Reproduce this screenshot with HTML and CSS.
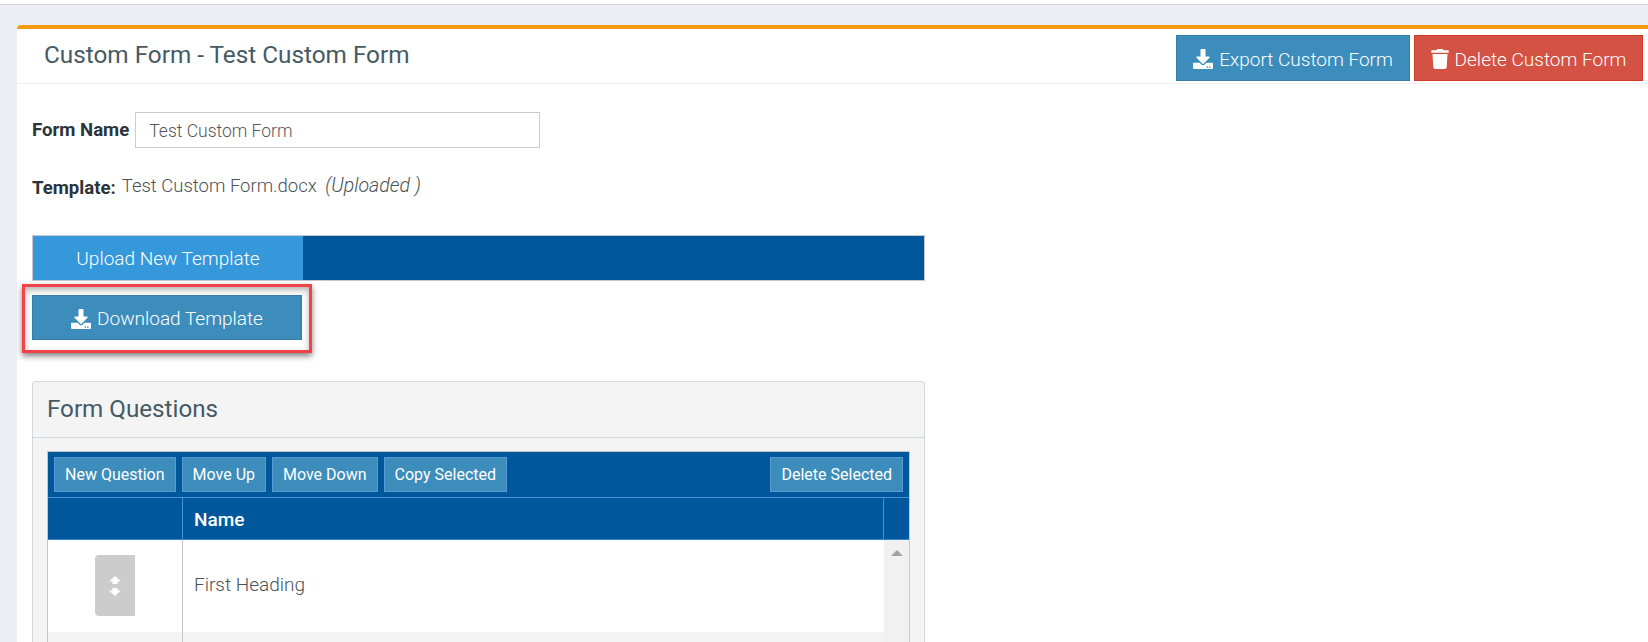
FILE: index.html
```html
<!DOCTYPE html>
<html lang="en">
<head>
    <meta charset="UTF-8">
    <meta name="viewport" content="width=device-width, initial-scale=1.0">
    <title>Custom Form - Test Custom Form</title>
    <link rel="stylesheet" href="styles.css">
</head>
<body>
    <div class="top-strip"></div>
    <div class="card">
        <div class="card-header">
            <h1>Custom Form - Test Custom Form</h1>
            <div class="header-actions">
                <button class="btn btn-blue btn-export">
                    <svg class="icon" viewBox="0 0 512 512"><path d="M216 0h80c13.3 0 24 10.7 24 24v168h87.7c17.8 0 26.7 21.5 14.1 34.1L269.7 378.3c-7.5 7.5-19.8 7.5-27.3 0L90.1 226.1c-12.6-12.6-3.7-34.1 14.1-34.1H192V24c0-13.3 10.7-24 24-24zm296 376v112c0 13.3-10.7 24-24 24H24c-13.3 0-24-10.7-24-24V376c0-13.3 10.7-24 24-24h146.7l49 49c20.1 20.1 52.5 20.1 72.6 0l49-49H488c13.3 0 24 10.7 24 24zm-124 88c0-11-9-20-20-20s-20 9-20 20 9 20 20 20 20-9 20-20zm64 0c0-11-9-20-20-20s-20 9-20 20 9 20 20 20 20-9 20-20z"/></svg>
                    Export Custom Form
                </button>
                <button class="btn btn-red">
                    <svg class="icon icon-trash" viewBox="0 0 448 512"><path d="M432 32H312l-9.4-18.7A24 24 0 0 0 281.1 0H166.8a23.72 23.72 0 0 0-21.4 13.3L136 32H16A16 16 0 0 0 0 48v32a16 16 0 0 0 16 16h416a16 16 0 0 0 16-16V48a16 16 0 0 0-16-16zM53.2 467a48 48 0 0 0 47.9 45h245.8a48 48 0 0 0 47.9-45L416 128H32z"/></svg>
                    Delete Custom Form
                </button>
            </div>
        </div>

        <div class="card-body">
            <div class="form-row">
                <label class="field-label">Form Name</label>
                <input class="text-input" type="text" value="Test Custom Form">
            </div>

            <div class="template-row">
                <span class="field-label template-label">Template:</span>
                <span>Test Custom Form.docx <em>(Uploaded )</em></span>
            </div>

            <div class="tab-bar">
                <div class="tab">Upload New Template</div>
            </div>

            <button class="btn btn-blue btn-download">
                <svg class="icon" viewBox="0 0 512 512"><path d="M216 0h80c13.3 0 24 10.7 24 24v168h87.7c17.8 0 26.7 21.5 14.1 34.1L269.7 378.3c-7.5 7.5-19.8 7.5-27.3 0L90.1 226.1c-12.6-12.6-3.7-34.1 14.1-34.1H192V24c0-13.3 10.7-24 24-24zm296 376v112c0 13.3-10.7 24-24 24H24c-13.3 0-24-10.7-24-24V376c0-13.3 10.7-24 24-24h146.7l49 49c20.1 20.1 52.5 20.1 72.6 0l49-49H488c13.3 0 24 10.7 24 24zm-124 88c0-11-9-20-20-20s-20 9-20 20 9 20 20 20 20-9 20-20zm64 0c0-11-9-20-20-20s-20 9-20 20 9 20 20 20 20-9 20-20z"/></svg>
                Download Template
            </button>

            <div class="panel">
                <div class="panel-heading">Form Questions</div>
                <div class="panel-body">
                    <div class="grid">
                        <div class="grid-toolbar">
                            <button class="tool-btn">New Question</button>
                            <button class="tool-btn">Move Up</button>
                            <button class="tool-btn">Move Down</button>
                            <button class="tool-btn">Copy Selected</button>
                            <button class="tool-btn tool-btn-right">Delete Selected</button>
                        </div>
                        <div class="grid-head">
                            <div class="col-handle"></div>
                            <div class="col-name">Name</div>
                            <div class="col-scroll"></div>
                        </div>
                        <div class="grid-content">
                            <div class="grid-rows">
                                <div class="grid-row">
                                    <div class="col-handle">
                                        <div class="drag-handle">
                                            <svg viewBox="0 0 12 20"><path d="M6 0l6 5.5H8.5v2.5h-5V5.500H0zM6 20l-6-5.500h3.500V12h5v2.500H12z"/></svg>
                                        </div>
                                    </div>
                                    <div class="col-name">First Heading</div>
                                </div>
                                <div class="grid-row grid-row-alt">
                                    <div class="col-handle"></div>
                                    <div class="col-name"></div>
                                </div>
                            </div>
                            <div class="scrollbar"><span class="scroll-up"></span></div>
                        </div>
                    </div>
                </div>
            </div>
        </div>
    </div>

    <!-- red callout drawn over the screenshot -->
    <div class="callout"></div>
</body>
</html>
```

FILE: styles.css
```css
* {
    box-sizing: border-box;
}

html, body {
    height: 642px;
    overflow: hidden;
}

body {
    margin: 0;
    background: #ebeef3;
    color: #4a5257;
    font-family: 'Roboto', sans-serif;
    font-weight: 300;
    font-size: 18.5px;
    position: relative;
}

.top-strip {
    height: 5px;
    background: #fff;
    border-bottom: 1px solid #d4d6da;
    margin-bottom: 20px;
}

.card {
    margin-left: 17px;
    background: #fff;
    border-top: 4px solid #f39c12;
    border-top-left-radius: 4px;
    height: 617px;
}

.card-header {
    height: 55px;
    padding: 6px 5px 0 27px;
    border-bottom: 1px solid #f0f0f0;
    display: flex;
    justify-content: space-between;
}

h1 {
    margin: 0;
    padding-top: 5px;
    font-size: 24.3px;
    line-height: 30px;
    font-weight: 400;
    color: #455a64;
}

.header-actions {
    display: flex;
    gap: 4px;
}

.btn {
    height: 46px;
    border: 1px solid #367fa9;
    border-radius: 0;
    color: #fff;
    font-family: inherit;
    font-weight: 300;
    font-size: 19px;
    display: flex;
    align-items: center;
    justify-content: center;
    gap: 6px;
    padding: 2px 0 0;
}

.btn-blue {
    background: #3c8dbc;
}

.btn-red {
    background: #d35244;
    border-color: #d73925;
    width: 229px;
}

.btn-export {
    width: 234px;
}

.icon {
    width: 20px;
    height: 20px;
    fill: #fff;
}

.icon-trash {
    width: 18px;
}

.card-body {
    padding: 28px 0 0 15px;
}

.form-row {
    display: flex;
    align-items: center;
    gap: 6px;
    height: 36px;
}

.field-label {
    font-weight: 700;
    color: #2b343a;
    font-size: 18.6px;
}

.text-input {
    width: 405px;
    height: 36px;
    border: 1px solid #ccc;
    padding: 2px 13px 0;
    font-family: inherit;
    font-weight: 300;
    font-size: 17.5px;
    color: #555;
    outline: none;
}

.template-row {
    margin-top: 26px;
    height: 24px;
    display: flex;
    gap: 6px;
    align-items: flex-start;
}

.template-row em {
    font-size: 19.5px;
    margin-left: 4px;
}

.template-label {
    margin-top: 3px;
}

.tab-bar {
    margin-top: 37px;
    width: 893px;
    height: 46px;
    background: #00579b;
    border: 1px solid #c4c8cc;
}

.tab {
    width: 270px;
    height: 100%;
    background: #3498db;
    color: #fff;
    font-size: 19px;
    display: flex;
    align-items: center;
    justify-content: center;
}

.btn-download {
    margin-top: 14px;
    width: 270px;
    height: 45px;
    border-color: #367fa9;
}

.panel {
    margin-top: 41px;
    width: 893px;
    border: 1px solid #d5d7de;
    border-bottom: 0;
    border-radius: 4px 4px 0 0;
    background: #f4f4f4;
    height: 261px;
}

.panel-heading {
    height: 56px;
    padding-left: 14px;
    font-size: 24.2px;
    font-weight: 400;
    line-height: 54px;
    color: #455a64;
    border-bottom: 1px solid #d5d7de;
}

.panel-body {
    padding: 13px 14px 0 14px;
}

.grid {
    border: 1px solid #c4c8cc;
    border-bottom: 0;
    height: 191px;
    overflow: hidden;
}

.grid-toolbar {
    height: 46px;
    background: #00579b;
    padding: 5px 6px 0 6px;
    display: flex;
    gap: 6px;
    align-items: flex-start;
    border-bottom: 1px solid #4a90d6;
}

.tool-btn {
    height: 35px;
    padding: 0 10px;
    background: #3c8dbc;
    border: 1px solid #5a9bd5;
    color: #fff;
    font-family: inherit;
    font-size: 16px;
    font-weight: 400;
    white-space: nowrap;
}

.tool-btn-right {
    margin-left: auto;
}

.grid-head {
    height: 42px;
    background: #00579b;
    display: flex;
    border-bottom: 1px solid #3d82cf;
    color: #fff;
    font-size: 19px;
    font-weight: 500;
}

.grid-head .col-name {
    flex: 1;
    line-height: 44px;
    border-left: 1px solid #4a90d6;
    border-right: 1px solid #4a90d6;
}

.col-handle {
    width: 134px;
    flex: none;
}

.col-name {
    padding-left: 11px;
}

.col-scroll {
    width: 25px;
    flex: none;
}

.grid-content {
    display: flex;
}

.grid-rows {
    flex: 1;
}

.grid-row {
    display: flex;
    height: 92px;
    background: #fff;
}

.grid-row .col-handle {
    display: flex;
    justify-content: center;
    padding-top: 15px;
}

.grid-row .col-name {
    flex: 1;
    border-left: 1px solid #c4c8cc;
    font-size: 19px;
    line-height: 90px;
    color: #4a5257;
}

.grid-row-alt {
    background: #f4f4f4;
    height: 11px;
}

.drag-handle {
    width: 40px;
    height: 61px;
    background: #ccc;
    border-radius: 4px 0 0 4px;
    display: flex;
    align-items: center;
    justify-content: center;
}

.drag-handle svg {
    width: 12px;
    height: 20px;
    fill: #fff;
}

.scrollbar {
    width: 25px;
    flex: none;
    background: #f1f1f1;
    height: 103px;
    padding-top: 10px;
    display: flex;
    justify-content: center;
    align-items: flex-start;
}

.scroll-up {
    width: 0;
    height: 0;
    border-left: 6px solid transparent;
    border-right: 6px solid transparent;
    border-bottom: 6px solid #a3a3a3;
}

.callout {
    position: absolute;
    left: 22px;
    top: 284px;
    width: 290px;
    height: 69px;
    border: 3px solid #f44346;
    box-shadow: 0 3px 6px rgba(0, 0, 0, 0.5), inset 0 3px 6px rgba(0, 0, 0, 0.3);
}
```
